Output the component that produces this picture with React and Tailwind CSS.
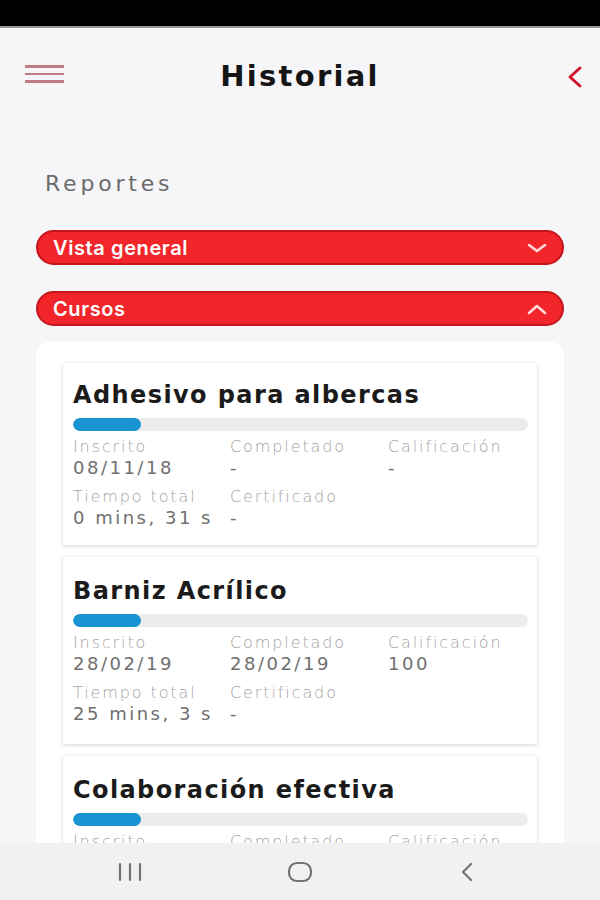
import React from "react";

const courses = [
  {
    title: "Adhesivo para albercas",
    inscrito: "08/11/18",
    completado: "-",
    calificacion: "-",
    tiempo: "0 mins, 31 s",
    certificado: "-",
    pad: "pt-[17px] pb-[16px]",
  },
  {
    title: "Barniz Acrílico",
    inscrito: "28/02/19",
    completado: "28/02/19",
    calificacion: "100",
    tiempo: "25 mins, 3 s",
    certificado: "-",
    pad: "pt-[19px] pb-[19px]",
  },
  {
    title: "Colaboración efectiva",
    inscrito: "10/03/19",
    completado: "-",
    calificacion: "-",
    tiempo: "0 mins, 12 s",
    certificado: "-",
    pad: "pt-[19px] pb-[19px]",
  },
];

const dv = { fontFamily: "'DejaVu Sans', 'Noto Sans', sans-serif" };

function Field({ label, value }) {
  return (
    <div className="flex flex-col" style={dv}>
      <span className="text-[16px] leading-[20px] text-[#a3a3a3] tracking-[1.9px] font-light whitespace-nowrap">{label}</span>
      <span className="text-[18px] leading-[22px] text-[#6f6f6f] tracking-[2.5px] whitespace-nowrap">{value}</span>
    </div>
  );
}

function Card({ c }) {
  return (
    <div className={`bg-white rounded-[3px] shadow-[0_1px_4px_rgba(0,0,0,0.18)] pl-[10px] pr-[9px] ${c.pad}`}>
      <div className="text-[24px] leading-[30px] font-bold text-[#1b1b1b] tracking-[1.4px] whitespace-nowrap" style={dv}>{c.title}</div>
      <div className="mt-[8px] h-[13px] rounded-full bg-[#ececec] overflow-hidden">
        <div className="h-full w-[68px] rounded-full bg-[#1a93d2]" />
      </div>
      <div className="mt-[6px] grid grid-cols-[157px_158px_1fr] gap-y-[8px]">
        <Field label="Inscrito" value={c.inscrito} />
        <Field label="Completado" value={c.completado} />
        <Field label="Calificación" value={c.calificacion} />
        <Field label="Tiempo total" value={c.tiempo} />
        <Field label="Certificado" value={c.certificado} />
      </div>
    </div>
  );
}

function Pill({ label, up }) {
  return (
    <div className="h-[35px] rounded-full bg-[#f2252a] border-2 border-[#c4161c] flex items-center justify-between pl-[15px] pr-[14px]">
      <span className="text-white text-[20px] font-semibold tracking-[0.6px]">{label}</span>
      <svg width="22" height="12" viewBox="0 0 22 12" fill="none" stroke="#ffd9dc" strokeWidth="2.6" strokeLinecap="round" strokeLinejoin="round">
        {up ? <path d="M3 10 L11 3 L19 10" /> : <path d="M3 3 L11 9 L19 3" />}
      </svg>
    </div>
  );
}

export default function App() {
  return (
    <div className="w-[600px] h-[900px] flex flex-col bg-[#f6f6f8] overflow-hidden" style={{ fontFamily: "Inter, 'Noto Sans', sans-serif" }}>
      <div className="h-[28px] bg-black border-b-2 border-[#9a9a9a] shrink-0" />
      <div className="flex-1 overflow-hidden">
        <div className="relative h-[96px] flex items-center justify-center">
          <div className="absolute left-[25px] top-[37px] flex flex-col gap-[5px]">
            <div className="w-[39px] h-[2.5px] bg-[#c07c84]" />
            <div className="w-[39px] h-[2.5px] bg-[#c07c84]" />
            <div className="w-[39px] h-[2.5px] bg-[#c07c84]" />
          </div>
          <span className="text-[29px] font-bold text-[#151515] tracking-[2.3px] mt-[2px]" style={dv}>Historial</span>
          <svg className="absolute left-[566px] top-[37px]" width="18" height="24" viewBox="0 0 18 24" fill="none" stroke="#d0152a" strokeWidth="3" strokeLinecap="round" strokeLinejoin="round">
            <path d="M14 3 L4 12 L14 21" />
          </svg>
        </div>
        <div className="pl-[45px] pt-[45px] text-[22px] text-[#6b6b6b] tracking-[3.8px] leading-[30px]" style={dv}>Reportes</div>
        <div className="px-[36px] mt-[31px] flex flex-col gap-[26px]">
          <Pill label="Vista general" />
          <Pill label="Cursos" up />
        </div>
        <div className="mx-[36px] mt-[16px] bg-white rounded-[14px] pt-[21px] px-[27px] pb-[20px] flex flex-col gap-[12px]">
          {courses.map((c) => (
            <Card key={c.title} c={c} />
          ))}
        </div>
      </div>
      <div className="h-[57px] shrink-0 bg-[#f1f1f1] flex items-center">
        <div className="w-[260px] flex justify-center">
          <svg width="28" height="20" viewBox="0 0 28 20" fill="none" stroke="#737373" strokeWidth="2.2" strokeLinecap="round">
            <path d="M4 2 V18 M14 2 V18 M24 2 V18" />
          </svg>
        </div>
        <div className="w-[80px] flex justify-center">
          <svg width="26" height="22" viewBox="0 0 26 22" fill="none" stroke="#737373" strokeWidth="2.2">
            <rect x="2" y="2" width="22" height="18" rx="8" />
          </svg>
        </div>
        <div className="w-[254px] flex justify-center">
          <svg width="16" height="22" viewBox="0 0 16 22" fill="none" stroke="#737373" strokeWidth="2.2" strokeLinecap="round" strokeLinejoin="round">
            <path d="M12 3 L4 11 L12 19" />
          </svg>
        </div>
      </div>
    </div>
  );
}
